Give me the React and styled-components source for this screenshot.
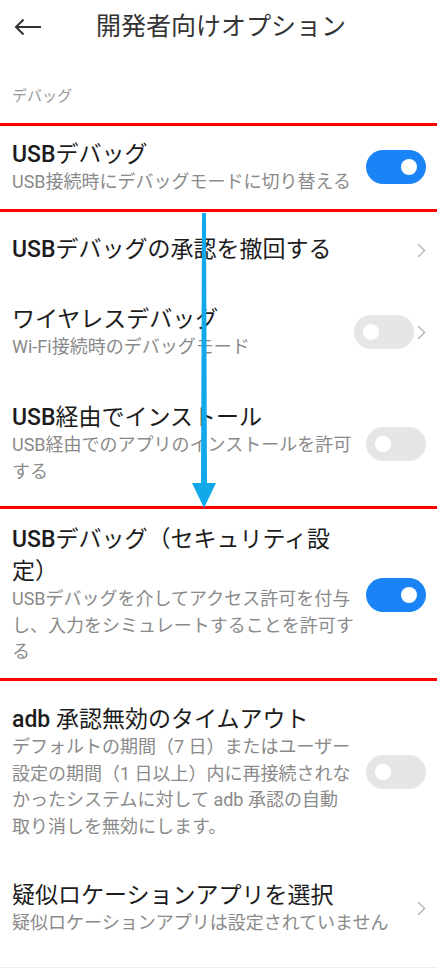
import styled, { createGlobalStyle } from 'styled-components';

const GlobalStyle = createGlobalStyle`
    html, body {
        margin: 0;
        padding: 0;
        background: #fff;
    }
    body {
        font-family: Roboto, "Noto Sans CJK JP", sans-serif;
        -webkit-font-smoothing: antialiased;
    }
`;

const Screen = styled.div`
    position: relative;
    width: 437px;
    min-height: 972px;
    background: #fff;
    overflow: hidden;
`;

const Header = styled.header`
    display: flex;
    align-items: center;
    height: 54px;
    padding-left: 14px;
`;

const BackButton = styled.button`
    display: flex;
    align-items: center;
    padding: 0;
    border: 0;
    background: none;
    color: #333;
`;

const HeaderTitle = styled.h1`
    margin: 0 0 0 54px;
    font-size: 25px;
    font-weight: 400;
    line-height: 32px;
    color: #333;
`;

const SectionLabel = styled.div`
    padding: 32px 12px 17px;
    font-size: 15px;
    line-height: 20px;
    color: #9a9a9a;
`;

const Highlight = styled.div`
    border-top: 3px solid #f00;
    border-bottom: 3px solid #f00;
`;

const Row = styled.div`
    display: flex;
    align-items: center;
    gap: ${(p) => p.$gap ?? 12}px;
    padding: ${(p) => p.$pt ?? 20}px 11px ${(p) => p.$pb ?? 20}px 12px;
    border-bottom: ${(p) => (p.$divider ? '1px solid #ededed' : 'none')};
`;

const Texts = styled.div`
    flex: 1;
    min-width: 0;
`;

const Title = styled.div`
    font-size: 23px;
    font-weight: 400;
    line-height: 32px;
    color: #1c1c1c;
`;

const Latin = styled.span`
    font-weight: 500;
`;

const Subtitle = styled.div`
    margin-top: -2px;
    font-size: 18px;
    line-height: 26.5px;
    color: #8a8a8a;
`;

const Controls = styled.div`
    display: flex;
    align-items: center;
    gap: 3px;
`;

const Toggle = styled.div`
    display: flex;
    align-items: center;
    justify-content: ${(p) => (p.$on ? 'flex-end' : 'flex-start')};
    box-sizing: border-box;
    width: 60px;
    height: 34px;
    padding: 0 9px;
    border-radius: 17px;
    background: ${(p) => (p.$on ? '#1a84f7' : '#e6e6e6')};
`;

const Knob = styled.span`
    width: 16px;
    height: 16px;
    border-radius: 50%;
    background: #fff;
`;

const ArrowOverlay = styled.svg`
    position: absolute;
    left: 192px;
    top: 213px;
    pointer-events: none;
`;

const Chevron = () => (
    <svg width="9" height="15" viewBox="0 0 9 15">
        <path d="M1.2 1.2 L7.6 7.5 L1.2 13.8" fill="none" stroke="#b0b0b0" strokeWidth="1.3" />
    </svg>
);

const Switch = ({ on }) => (
    <Toggle $on={on}>
        <Knob />
    </Toggle>
);

const App = () => {
    return (
        <Screen>
            <GlobalStyle />
            <Header>
                <BackButton aria-label="back">
                    <svg width="28" height="18" viewBox="0 0 28 18">
                        <path d="M27 9 H2 M9.5 1.5 L2 9 L9.5 16.5" fill="none" stroke="#333" strokeWidth="2" />
                    </svg>
                </BackButton>
                <HeaderTitle>開発者向けオプション</HeaderTitle>
            </Header>

            <SectionLabel>デバッグ</SectionLabel>

            <Highlight>
                <Row $pt={13} $pb={13.5}>
                    <Texts>
                        <Title><Latin>USB</Latin>デバッグ</Title>
                        <Subtitle>USB接続時にデバッグモードに切り替える</Subtitle>
                    </Texts>
                    <Switch on />
                </Row>
            </Highlight>

            <Row $pt={22} $pb={18}>
                <Texts>
                    <Title><Latin>USB</Latin>デバッグの承認を撤回する</Title>
                </Texts>
                <Chevron />
            </Row>

            <Row $pb={21.5}>
                <Texts>
                    <Title>ワイヤレスデバッグ</Title>
                    <Subtitle>Wi-Fi接続時のデバッグモード</Subtitle>
                </Texts>
                <Controls>
                    <Switch />
                    <Chevron />
                </Controls>
            </Row>

            <Row $pb={21}>
                <Texts>
                    <Title><Latin>USB</Latin>経由でインストール</Title>
                    <Subtitle>USB経由でのアプリのインストールを許可する</Subtitle>
                </Texts>
                <Switch />
            </Row>

            <Highlight>
                <Row $pt={15} $pb={12.5}>
                    <Texts>
                        <Title><Latin>USB</Latin>デバッグ（セキュリティ設定）</Title>
                        <Subtitle>USBデバッグを介してアクセス許可を付与し、入力をシミュレートすることを許可する</Subtitle>
                    </Texts>
                    <Switch on />
                </Row>
            </Highlight>

            <Row $pt={23}>
                <Texts>
                    <Title><Latin>adb</Latin> 承認無効のタイムアウト</Title>
                    <Subtitle>デフォルトの期間（7 日）またはユーザー設定の期間（1 日以上）内に再接続されなかったシステムに対して adb 承認の自動取り消しを無効にします。</Subtitle>
                </Texts>
                <Switch />
            </Row>

            <Row $pb={30} $divider>
                <Texts>
                    <Title>疑似ロケーションアプリを選択</Title>
                    <Subtitle>疑似ロケーションアプリは設定されていません</Subtitle>
                </Texts>
                <Chevron />
            </Row>

            <ArrowOverlay width="24" height="296" viewBox="0 0 24 296">
                <polygon points="10,0 14,0 15,270 9,270" fill="#12a8ea" />
                <polygon points="0,270 24,270 12,295" fill="#12a8ea" />
            </ArrowOverlay>
        </Screen>
    );
};

export default App;
